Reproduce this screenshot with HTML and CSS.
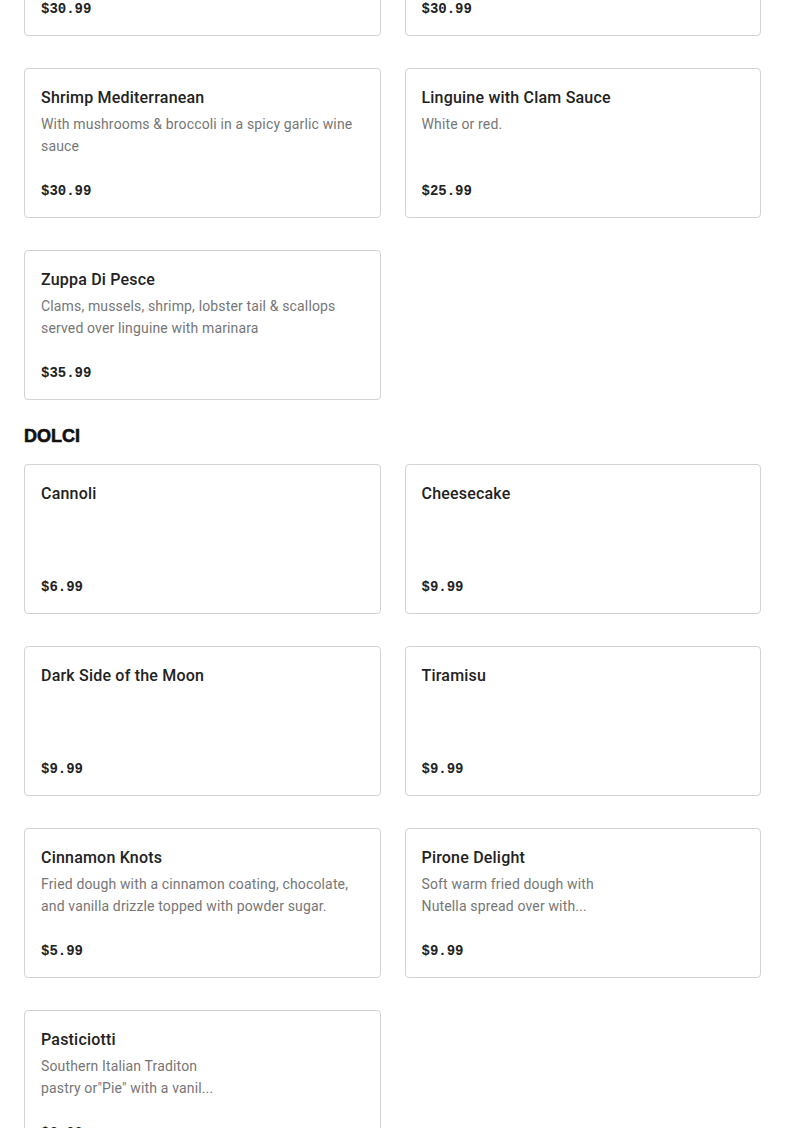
FILE: index.html
```html
<!DOCTYPE html>
<html lang="en">
<head>
<meta charset="utf-8">
<title>Menu</title>
<link rel="stylesheet" href="styles.css">
</head>
<body>
<main class="menu">
  <section class="section">
    <div class="grid">
      <article class="card">
        <h3 class="card-title">Shrimp Scampi</h3>
        <p class="card-desc">Sautéed in garlic, butter &amp; white wine</p>
        <div class="card-price">$30.99</div>
      </article>
      <article class="card">
        <h3 class="card-title">Seafood Fra Diavolo</h3>
        <p class="card-desc">Spicy marinara over linguine</p>
        <div class="card-price">$30.99</div>
      </article>
      <article class="card">
        <h3 class="card-title">Shrimp Mediterranean</h3>
        <p class="card-desc">With mushrooms &amp; broccoli in a spicy garlic wine sauce</p>
        <div class="card-price">$30.99</div>
      </article>
      <article class="card">
        <h3 class="card-title">Linguine with Clam Sauce</h3>
        <p class="card-desc">White or red.</p>
        <div class="card-price">$25.99</div>
      </article>
      <article class="card">
        <h3 class="card-title">Zuppa Di Pesce</h3>
        <p class="card-desc">Clams, mussels, shrimp, lobster tail &amp; scallops served over linguine with marinara</p>
        <div class="card-price">$35.99</div>
      </article>
    </div>
  </section>

  <section class="section">
    <h2 class="section-title">DOLCI</h2>
    <div class="grid">
      <article class="card">
        <h3 class="card-title">Cannoli</h3>
        <div class="card-price">$6.99</div>
      </article>
      <article class="card">
        <h3 class="card-title">Cheesecake</h3>
        <div class="card-price">$9.99</div>
      </article>
      <article class="card">
        <h3 class="card-title">Dark Side of the Moon</h3>
        <div class="card-price">$9.99</div>
      </article>
      <article class="card">
        <h3 class="card-title">Tiramisu</h3>
        <div class="card-price">$9.99</div>
      </article>
      <article class="card">
        <h3 class="card-title">Cinnamon Knots</h3>
        <p class="card-desc">Fried dough with a cinnamon coating, chocolate, and vanilla drizzle topped with powder sugar.</p>
        <div class="card-price">$5.99</div>
      </article>
      <article class="card">
        <h3 class="card-title">Pirone Delight</h3>
        <p class="card-desc">Soft warm fried dough with<br>Nutella spread over with...</p>
        <div class="card-price">$9.99</div>
      </article>
      <article class="card">
        <h3 class="card-title">Pasticiotti</h3>
        <p class="card-desc">Southern Italian Traditon<br>pastry or"Pie" with a vanil...</p>
        <div class="card-price">$6.99</div>
      </article>
    </div>
  </section>
</main>
</body>
</html>
```

FILE: styles.css
```css
html, body {
  margin: 0;
  padding: 0;
  background: #ffffff;
}

body {
  font-family: Roboto, "Liberation Sans", sans-serif;
  color: #222222;
  overflow: hidden;
}

.menu {
  padding: 0 24px;
  margin-top: -114px;
}

.section-title {
  margin: 24px 0 16px;
  font-family: "Liberation Sans", Arial, sans-serif;
  font-weight: 900;
  font-size: 18px;
  line-height: 24px;
  color: #111111;
  -webkit-text-stroke: 0.6px #111111;
}

.grid {
  display: grid;
  grid-template-columns: 1fr 1fr;
  gap: 32px 24px;
}

.card {
  box-sizing: border-box;
  height: 150px;
  border: 1px solid #d3d3d3;
  border-radius: 4px;
  padding: 17px 16px 16px;
  display: flex;
  flex-direction: column;
}

.card-title {
  margin: 0;
  font-size: 16px;
  font-weight: 500;
  line-height: 24px;
  letter-spacing: 0.2px;
  color: #222222;
}

.card-desc {
  margin: 3px 0 0;
  font-size: 14px;
  line-height: 22px;
  letter-spacing: 0.15px;
  color: #767676;
}

.card-price {
  margin-top: auto;
  font-family: "Liberation Mono", "DejaVu Sans Mono", monospace;
  font-weight: 700;
  font-size: 14px;
  line-height: 20px;
  color: #222222;
}
```
